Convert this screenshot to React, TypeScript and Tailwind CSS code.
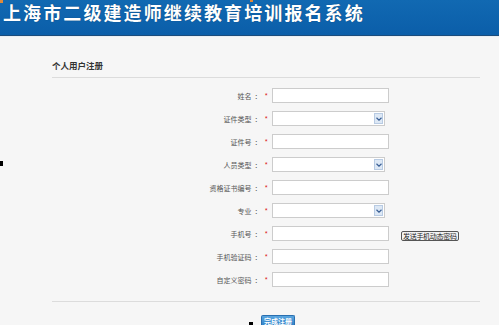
import React from "react";

const font = { fontFamily: '"Noto Sans CJK SC", "Noto Sans", sans-serif' };

type Row = { label: string; kind: "input" | "select"; extra?: boolean };

const rows: Row[] = [
  { label: "姓名", kind: "input" },
  { label: "证件类型", kind: "select" },
  { label: "证件号", kind: "input" },
  { label: "人员类型", kind: "select" },
  { label: "资格证书编号", kind: "input" },
  { label: "专业", kind: "select" },
  { label: "手机号", kind: "input", extra: true },
  { label: "手机验证码", kind: "input" },
  { label: "自定义密码", kind: "input" },
];

function SelectBox() {
  return (
    <div className="relative w-[113px] h-[15px] border border-[#cccccc] bg-white">
      <div className="absolute right-[1px] top-[1px] w-[9px] h-[11px] bg-[#dde8f5] border border-[#b8cbe3] flex items-center justify-center">
        <svg width="6" height="4" viewBox="0 0 6 4">
          <path d="M0.5 0.8 L3 3.2 L5.5 0.8" fill="none" stroke="#3a5f95" strokeWidth="1.2" />
        </svg>
      </div>
    </div>
  );
}

export default function App() {
  return (
    <div className="relative w-[499px] h-[325px] overflow-hidden bg-[#f6f6f6]" style={font}>
      <div className="h-[36px] bg-gradient-to-b from-[#1169b2] to-[#0b5ea9] border-b border-[#1b4c7c] flex items-start pl-[3px] pt-[1px]">
        <span className="text-white font-bold text-[18px] leading-[22px] tracking-[2.1px] [text-shadow:0_0_1px_rgba(0,0,0,0.4)]">
          上海市二级建造师继续教育培训报名系统
        </span>
      </div>
      <div className="h-[1px] bg-[#e9eef3]" />
      <div className="pl-[52px] pr-[19px]">
        <div className="pt-[23px] pb-[7px] leading-[10px] text-[8.5px] font-bold text-[#333] border-b border-[#dcdcdc]">
          个人用户注册
        </div>
        <div className="mt-[10px] flex flex-col gap-[8px]">
          {rows.map((r) => (
            <div key={r.label} className="flex items-center h-[15px]">
              <div className="w-[220px] flex justify-end items-center pr-[4px] text-[7px] leading-[10px] text-[#555]">
                <span>{r.label}</span>
                <span className="ml-[3px] mr-[3px]">：</span>
                <span className="text-[#d22] text-[7.5px]">*</span>
              </div>
              {r.kind === "input" ? (
                <div className="w-[117px] h-[15px] border border-[#cccccc] bg-white" />
              ) : (
                <SelectBox />
              )}
              {r.extra && (
                <div className="ml-[12px] mt-[4px] h-[10px] px-[1px] border border-[#555] rounded-[2px] bg-[#f2f2f2] text-[7px] leading-[8px] tracking-[-0.3px] text-[#222] flex items-center">
                  发送手机动态密码
                </div>
              )}
            </div>
          ))}
        </div>
        <div className="mt-[14px] border-t border-[#dcdcdc]" />
        <div className="mt-[13px] pl-[209px] flex items-start h-[11px]">
          <div className="flex items-center h-[11px] px-[2px] rounded-t-[2px] border border-b-0 border-[#2a6fb0] bg-gradient-to-b from-[#5aa6e0] to-[#2f80c6] text-white text-[7px] font-bold leading-[9px]">
            完成注册
          </div>
        </div>
      </div>
      <div className="absolute left-0 top-[161px] w-[3px] h-[5px] bg-black" />
      <div className="absolute left-[249px] top-[322px] w-[4px] h-[3px] bg-black" />
      <div className="absolute left-0 top-0 w-[3px] h-[3px] bg-[#e08a3a]" />
      <div className="absolute left-[250px] top-0 w-[3px] h-[2px] bg-[#e08a3a]" />
    </div>
  );
}
